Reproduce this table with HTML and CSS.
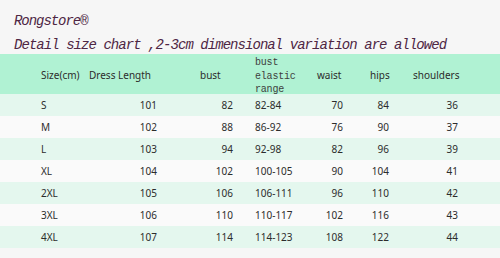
FILE: index.html
```html
<!DOCTYPE html>
<html>
<head>
<meta charset="utf-8">
<link rel="stylesheet" href="styles.css">
</head>
<body>
<div class="title">
  <div class="brand">Rongstore®</div>
  <div class="note">Detail size chart ,2-3cm dimensional variation are allowed</div>
</div>
<div class="table">
  <div class="row head">
    <div class="c1">Size(cm)</div>
    <div class="c2">Dress Length</div>
    <div class="c3">bust</div>
    <div class="c4 mono">bust<br>elastic<br>range</div>
    <div class="c5">waist</div>
    <div class="c6">hips</div>
    <div class="c7">shoulders</div>
  </div>
  <div class="row odd"><div class="c1">S</div><div class="c2">101</div><div class="c3">82</div><div class="c4">82-84</div><div class="c5">70</div><div class="c6">84</div><div class="c7">36</div></div>
  <div class="row even"><div class="c1">M</div><div class="c2">102</div><div class="c3">88</div><div class="c4">86-92</div><div class="c5">76</div><div class="c6">90</div><div class="c7">37</div></div>
  <div class="row odd"><div class="c1">L</div><div class="c2">103</div><div class="c3">94</div><div class="c4">92-98</div><div class="c5">82</div><div class="c6">96</div><div class="c7">39</div></div>
  <div class="row even"><div class="c1">XL</div><div class="c2">104</div><div class="c3">102</div><div class="c4">100-105</div><div class="c5">90</div><div class="c6">104</div><div class="c7">41</div></div>
  <div class="row odd"><div class="c1">2XL</div><div class="c2">105</div><div class="c3">106</div><div class="c4">106-111</div><div class="c5">96</div><div class="c6">110</div><div class="c7">42</div></div>
  <div class="row even"><div class="c1">3XL</div><div class="c2">106</div><div class="c3">110</div><div class="c4">110-117</div><div class="c5">102</div><div class="c6">116</div><div class="c7">43</div></div>
  <div class="row odd"><div class="c1">4XL</div><div class="c2">107</div><div class="c3">114</div><div class="c4">114-123</div><div class="c5">108</div><div class="c6">122</div><div class="c7">44</div></div>
</div>
</body>
</html>
```
FILE: styles.css
```css
html, body {
  margin: 0;
  padding: 0;
  background: #f6f6f6;
}
body {
  width: 500px;
  height: 258px;
  overflow: hidden;
}
.title {
  padding: 9px 0 0 14px;
  height: 54px;
  box-sizing: border-box;
  font-family: "Liberation Mono", monospace;
  font-style: italic;
  font-size: 14px;
  letter-spacing: -0.95px;
  color: #4e2644;
}
.brand {
  line-height: 24px;
  letter-spacing: -1.05px;
}
.note {
  line-height: 24px;
}
.table {
  font-family: "Noto Sans", sans-serif;
  font-size: 10px;
  color: #2c2c2c;
}
.row {
  display: grid;
  grid-template-columns: 85px 75px 80px 65px 45px 50px 100px;
  height: 22px;
  align-items: center;
}
.row.head {
  height: 40px;
  background: #b0f2d3;
}
.row.odd { background: #e4f7ee; }
.row.even { background: #fafafa; }
.row > div { white-space: nowrap; }
.c1 { padding-left: 41px; }
.c2 { text-align: right; padding-right: 3px; }
.c3 { text-align: right; padding-right: 7px; }
.c4 { padding-left: 15px; }
.c5 { text-align: right; padding-right: 7px; }
.c6 { text-align: right; padding-right: 11px; }
.c7 { text-align: right; padding-right: 42px; }
.head > div { text-align: left; padding-right: 0; }
.head .c2 { padding-left: 4px; }
.head .c3 { padding-left: 40px; }
.head .c5 { padding-left: 12px; }
.head .c6 { padding-left: 20px; }
.head .c7 { padding-left: 13px; }
.head .mono {
  align-self: start;
  font-family: "Liberation Mono", monospace;
  font-size: 10px;
  line-height: 13.5px;
  padding-top: 2px;
  letter-spacing: -0.2px;
  color: #3e3e3e;
}
```
